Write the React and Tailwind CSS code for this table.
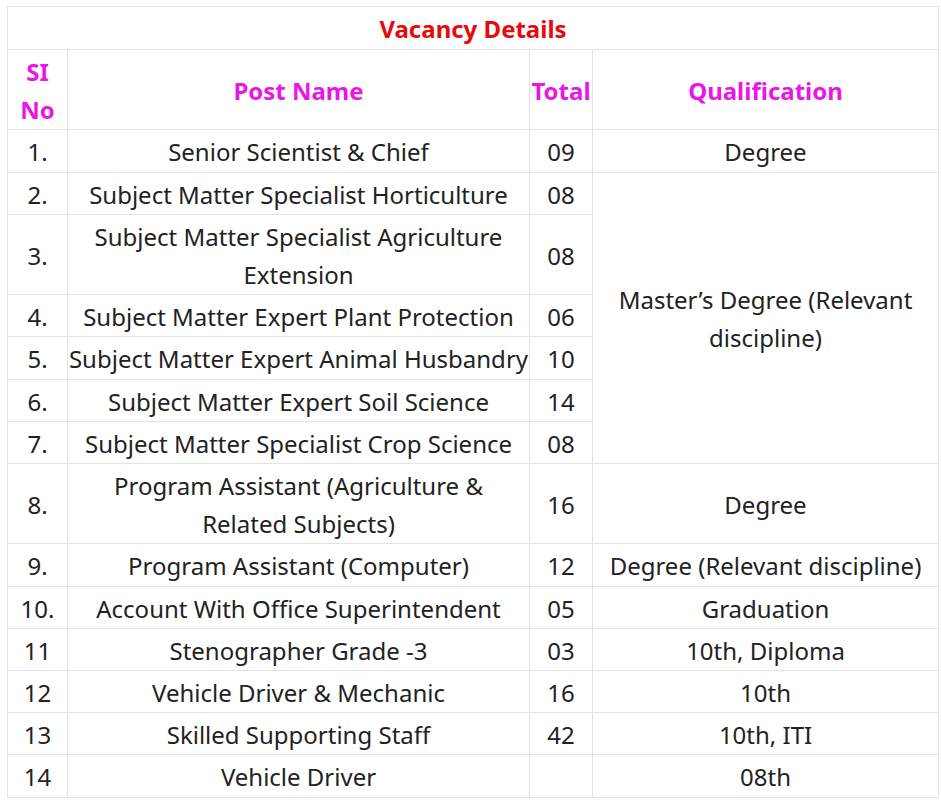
// App.jsx
const rows = [
  { no: '1.', post: ['Senior Scientist & Chief'], total: '09', qual: ['Degree'] },
  { no: '2.', post: ['Subject Matter Specialist Horticulture'], total: '08', qual: ['Master’s Degree (Relevant', 'discipline)'], span: 6 },
  { no: '3.', post: ['Subject Matter Specialist Agriculture', 'Extension'], total: '08', skip: true },
  { no: '4.', post: ['Subject Matter Expert Plant Protection'], total: '06', skip: true },
  { no: '5.', post: ['Subject Matter Expert Animal Husbandry'], total: '10', skip: true },
  { no: '6.', post: ['Subject Matter Expert Soil Science'], total: '14', skip: true },
  { no: '7.', post: ['Subject Matter Specialist Crop Science'], total: '08', skip: true },
  { no: '8.', post: ['Program Assistant (Agriculture &', 'Related Subjects)'], total: '16', qual: ['Degree'] },
  { no: '9.', post: ['Program Assistant (Computer)'], total: '12', qual: ['Degree (Relevant discipline)'] },
  { no: '10.', post: ['Account With Office Superintendent'], total: '05', qual: ['Graduation'] },
  { no: '11', post: ['Stenographer Grade -3'], total: '03', qual: ['10th, Diploma'] },
  { no: '12', post: ['Vehicle Driver & Mechanic'], total: '16', qual: ['10th'] },
  { no: '13', post: ['Skilled Supporting Staff'], total: '42', qual: ['10th, ITI'] },
  { no: '14', post: ['Vehicle Driver'], total: '', qual: ['08th'] },
];

const cell = 'border border-[#e2e2e2] px-0 pt-[3px] pb-0 text-center align-middle whitespace-nowrap';

function Lines({ items }) {
  return items.map((t, i) => (
    <span key={i} className="block">
      {t}
    </span>
  ));
}

export default function App() {
  return (
    <div
      className="bg-white min-h-[802px] pl-[7px] pt-[6px] text-[#222]"
      style={{ fontFamily: '"Noto Sans", "Open Sans", sans-serif' }}
    >
      <table className="table-fixed border-collapse w-[931px] text-[24px] leading-[38.2px]">
        <colgroup>
          <col className="w-[60px]" />
          <col className="w-[462px]" />
          <col className="w-[63px]" />
          <col className="w-[346px]" />
        </colgroup>
        <thead>
          <tr>
            <th colSpan={4} className={`${cell} h-[43px] font-bold text-[#e60a0a]`}>
              Vacancy Details
            </th>
          </tr>
          <tr className="text-[#e817e8] font-bold">
            <th className={cell}>
              <Lines items={['SI', 'No']} />
            </th>
            <th className={cell}>Post Name</th>
            <th className={cell}>Total</th>
            <th className={cell}>Qualification</th>
          </tr>
        </thead>
        <tbody>
          {rows.map((r) => (
            <tr key={r.no}>
              <td className={cell}>{r.no}</td>
              <td className={cell}>
                <Lines items={r.post} />
              </td>
              <td className={cell}>{r.total}</td>
              {!r.skip && (
                <td className={cell} rowSpan={r.span || 1}>
                  <Lines items={r.qual} />
                </td>
              )}
            </tr>
          ))}
        </tbody>
      </table>
    </div>
  );
}
